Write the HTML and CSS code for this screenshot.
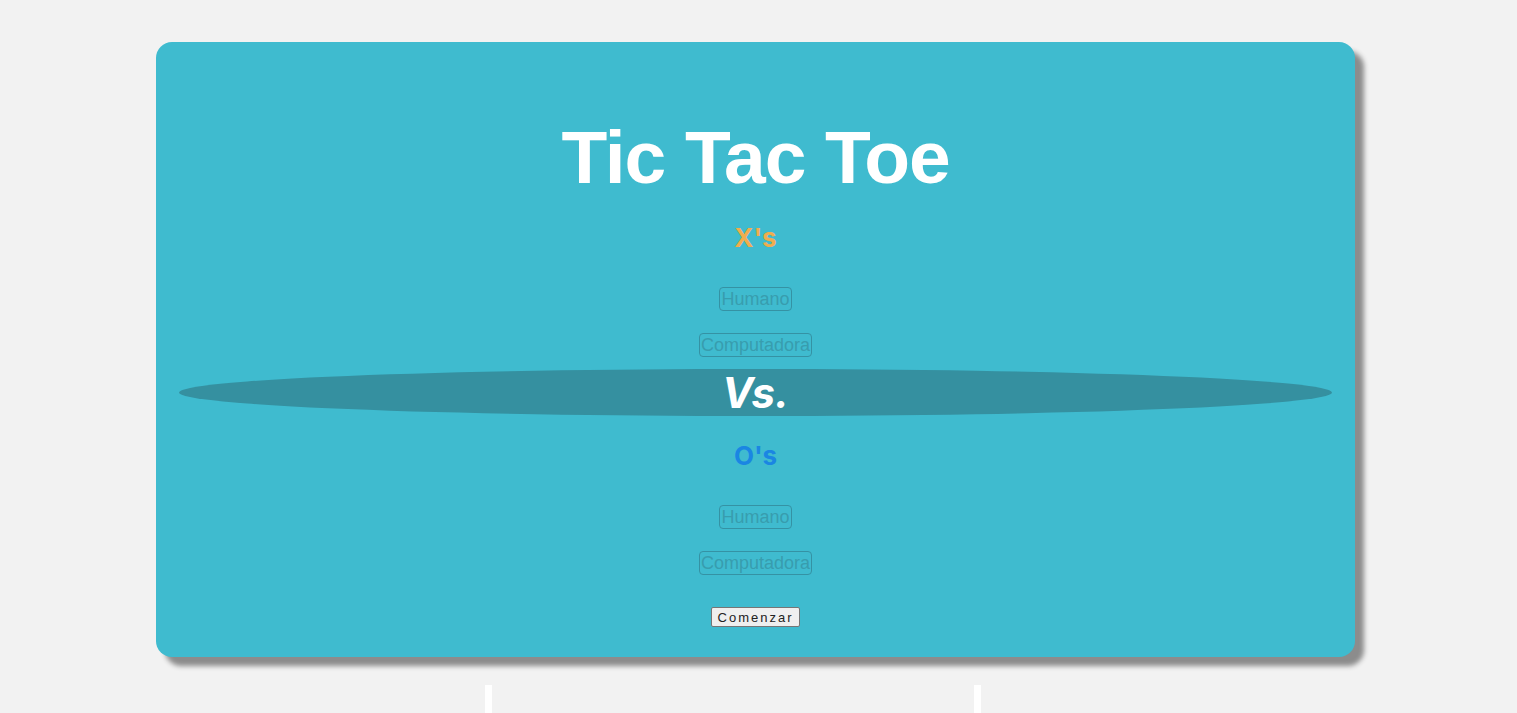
FILE: index.html
```html
<!DOCTYPE html>
<html lang="es">
<head>
<meta charset="utf-8">
<title>Tic Tac Toe</title>
<link rel="stylesheet" href="styles.css">
</head>
<body>
<div class="page">
  <section class="card">
    <h1 class="title">Tic Tac Toe</h1>
    <h2 class="player player-x">X's</h2>
    <button class="choice choice-first">Humano</button>
    <button class="choice">Computadora</button>
    <div class="vs"><span class="vs-text">Vs.</span></div>
    <h2 class="player player-o">O's</h2>
    <button class="choice choice-first">Humano</button>
    <button class="choice">Computadora</button>
    <button class="start">Comenzar</button>
  </section>
  <div class="board">
    <div class="board-line"></div>
    <div class="board-line"></div>
  </div>
</div>
</body>
</html>
```

FILE: styles.css
```css
html, body {
  margin: 0;
  padding: 0;
  background: #f2f2f2;
  overflow: hidden;
  height: 713px;
}

.page {
  padding: 42px 6px 0 0;
  display: flex;
  flex-direction: column;
  align-items: center;
}

.card {
  width: 1199px;
  box-sizing: border-box;
  background: #3fbbcf;
  border-radius: 16px;
  box-shadow: 9px 9px 5px #8c8c8c;
  padding: 75px 0 30px;
  display: flex;
  flex-direction: column;
  align-items: center;
}

.title {
  margin: 0;
  font-family: "Liberation Sans", Arial, sans-serif;
  font-weight: bold;
  font-size: 75px;
  line-height: 80px;
  letter-spacing: -1.1px;
  color: #ffffff;
}

.player {
  margin: 26px 0 0;
  font-family: Inter, "Liberation Sans", sans-serif;
  font-weight: 700;
  font-size: 26px;
  line-height: 30px;
  height: 30px;
}

.player-x { color: #f0ad4e; }
.player-o { color: #1a86e3; margin-top: 25px; }

.choice {
  margin: 22px 0 0;
  padding: 0 1px;
  height: 24px;
  box-sizing: border-box;
  background: transparent;
  border: 1px solid #3592a4;
  border-radius: 4px;
  font-family: "Liberation Sans", Arial, sans-serif;
  font-size: 18px;
  line-height: 20px;
  color: #389dae;
}

.choice-first { margin-top: 34px; }

.vs {
  margin-top: 12px;
  width: 1153px;
  height: 47px;
  border-radius: 50%;
  background: #3590a0;
  display: flex;
  align-items: center;
  justify-content: center;
}

.vs-text {
  font-family: Inter, "Liberation Sans", sans-serif;
  font-style: italic;
  font-weight: 700;
  font-size: 42px;
  line-height: 47px;
  color: #ffffff;
}

.start {
  margin-top: 32px;
  height: 20px;
  padding: 0 6px;
  font-family: "Liberation Sans", Arial, sans-serif;
  font-size: 13px;
  letter-spacing: 2px;
  color: #222;
  background: #efefef;
  border: 1px solid #767676;
  border-radius: 2px;
}

.board {
  margin-top: 28px;
  margin-left: -46px;
  width: 496px;
  height: 40px;
  display: flex;
  justify-content: space-between;
}

.board-line {
  width: 7px;
  height: 40px;
  background: #ffffff;
}
```
